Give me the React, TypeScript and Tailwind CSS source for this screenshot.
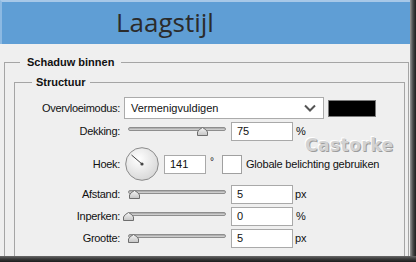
import React from "react";

const ui = "font-['Liberation_Sans',Arial,sans-serif]";

function Slider({ pos }: { pos: number }) {
  // pos = thumb centre, in px from the left of the slider box
  return (
    <div className="relative w-[106px] h-[12px] ml-[4px] self-start mt-[4px]">
      <div className="absolute left-[4px] right-[4px] top-[1px] h-[4px] rounded-full border border-[#8e8e8e] bg-gradient-to-b from-[#a4a4a4] to-[#dadada]" />
      <svg
        width="11"
        height="9"
        viewBox="0 0 11 9"
        className="absolute top-[1px]"
        style={{ left: pos - 5 }}
      >
        <defs>
          <linearGradient id="th" x1="0" y1="0" x2="0" y2="1">
            <stop offset="0" stopColor="#f6f6f6" />
            <stop offset="1" stopColor="#c4c4c4" />
          </linearGradient>
        </defs>
        <path
          d="M0.5 8.5 L0.5 5 Q1.5 2.5 5.5 0.5 Q9.5 2.5 10.5 5 L10.5 8.5 Z"
          fill="url(#th)"
          stroke="#6e6e6e"
          strokeWidth="1"
        />
      </svg>
    </div>
  );
}

function Field({ value, w = "w-[62px]" }: { value: string; w?: string }) {
  return (
    <div
      className={`${w} h-[19px] bg-white border border-[#a9a9a9] pl-[5px] flex items-center text-[11px] text-[#111]`}
    >
      {value}
    </div>
  );
}

function Label({ children }: { children: React.ReactNode }) {
  return (
    <div className="w-[105px] shrink-0 text-right text-[11px] text-[#111] tracking-[-0.3px]">
      {children}
    </div>
  );
}

function App() {
  return (
    <div className={`w-[416px] h-[262px] flex flex-col overflow-hidden bg-[#efefef] ${ui}`}>
      <div className="flex h-[256px]">
        <div className="w-[410px] flex flex-col overflow-hidden">
          {/* title bar */}
          <div className="h-[44px] shrink-0 bg-[#5f9ed5] border-t-2 border-t-[#a7c8e8] border-l-2 border-l-[#8cb9e2] flex items-center pl-[114px]">
            <span className="text-[26px] text-[#2b2b2b] font-['Open_Sans',sans-serif] leading-none -mt-[2px]">
              Laagstijl
            </span>
          </div>

          <div className="relative flex-1 pl-[4px] pt-[11px]">
            <fieldset className="w-[405px] h-[210px] border border-[#a5a5a5] pl-[9px]">
              <legend className="ml-[6px] px-[7px] text-[11px] leading-[14px] font-bold text-[#111]">
                Schaduw binnen
              </legend>

              <fieldset className="mt-[6px] w-[391px] border border-[#a5a5a5] pt-[8px] pb-[11px]">
                <legend className="ml-[17px] px-[4px] text-[11px] leading-[14px] font-bold text-[#111]">
                  Structuur
                </legend>

                {/* Overvloeimodus */}
                <div className="flex items-center h-[22px]">
                  <Label>Overvloeimodus:</Label>
                  <div className="ml-[4px] w-[200px] h-[22px] bg-white border border-[#ababab] flex items-center justify-between pl-[6px] pr-[7px] text-[11px] text-[#111]">
                    <span>Vermenigvuldigen</span>
                    <svg width="12" height="8" viewBox="0 0 12 8">
                      <path d="M1 1.5 L6 6.5 L11 1.5" fill="none" stroke="#555" strokeWidth="2" />
                    </svg>
                  </div>
                  <div className="ml-[4px] w-[48px] h-[17px] bg-black border border-[#7a7a7a]" />
                </div>

                {/* Dekking */}
                <div className="flex items-center h-[19px] mt-[3px]">
                  <Label>Dekking:</Label>
                  <Slider pos={78} />
                  <div className="ml-[1px]">
                    <Field value="75" />
                  </div>
                  <span className="ml-[3px] text-[11px] text-[#111]">%</span>
                </div>

                {/* Hoek */}
                <div className="flex items-center h-[34px] mt-[6px]">
                  <Label>Hoek:</Label>
                  <svg width="34" height="34" viewBox="0 0 34 34" className="ml-[5px]">
                    <defs>
                      <radialGradient id="dial" cx="0.4" cy="0.35" r="0.7">
                        <stop offset="0" stopColor="#ffffff" />
                        <stop offset="1" stopColor="#d6d6d6" />
                      </radialGradient>
                    </defs>
                    <circle cx="17" cy="17" r="16.3" fill="url(#dial)" stroke="#8a8a8a" strokeWidth="1" />
                    <line x1="17" y1="17" x2="6.5" y2="8" stroke="#444" strokeWidth="1" />
                    <circle cx="17" cy="17" r="1.6" fill="#444" />
                  </svg>
                  <div className="ml-[5px]">
                    <Field value="141" w="w-[42px]" />
                  </div>
                  <span className="ml-[4px] -mt-[6px] text-[10px] text-[#111]">°</span>
                  <div className="ml-[8px] w-[20px] h-[19px] bg-white border border-[#a0a0a0]" />
                  <span className="ml-[4px] text-[11px] text-[#111] tracking-[-0.2px]">
                    Globale belichting gebruiken
                  </span>
                </div>

                {/* Afstand */}
                <div className="flex items-center h-[19px] mt-[4px]">
                  <Label>Afstand:</Label>
                  <Slider pos={10} />
                  <div className="ml-[1px]">
                    <Field value="5" />
                  </div>
                  <span className="ml-[2px] text-[11px] text-[#111]">px</span>
                </div>

                {/* Inperken */}
                <div className="flex items-center h-[19px] mt-[3px]">
                  <Label>Inperken:</Label>
                  <Slider pos={4} />
                  <div className="ml-[1px]">
                    <Field value="0" />
                  </div>
                  <span className="ml-[3px] text-[11px] text-[#111]">%</span>
                </div>

                {/* Grootte */}
                <div className="flex items-center h-[19px] mt-[3px]">
                  <Label>Grootte:</Label>
                  <Slider pos={9} />
                  <div className="ml-[1px]">
                    <Field value="5" />
                  </div>
                  <span className="ml-[2px] text-[11px] text-[#111]">px</span>
                </div>
              </fieldset>
            </fieldset>

            {/* watermark */}
            <span className="absolute left-[305px] top-[89px] text-[17px] font-bold tracking-[0.5px] text-[#d2d2d2] font-['DejaVu_Sans',sans-serif] [text-shadow:1px_1px_0_#9c9c9c,-1px_-1px_0_#ffffff]">
              Castorke
            </span>
          </div>
        </div>
        {/* right window edge */}
        <div className="w-[6px] bg-gradient-to-r from-[#9a9a9a] via-[#4a4a4a] to-[#1e1e1e]" />
      </div>
      {/* bottom window edge */}
      <div className="h-[6px] bg-gradient-to-b from-[#6a6a6a] via-[#3a3a3a] to-[#1c1c1c]" />
    </div>
  );
}

export default App;
